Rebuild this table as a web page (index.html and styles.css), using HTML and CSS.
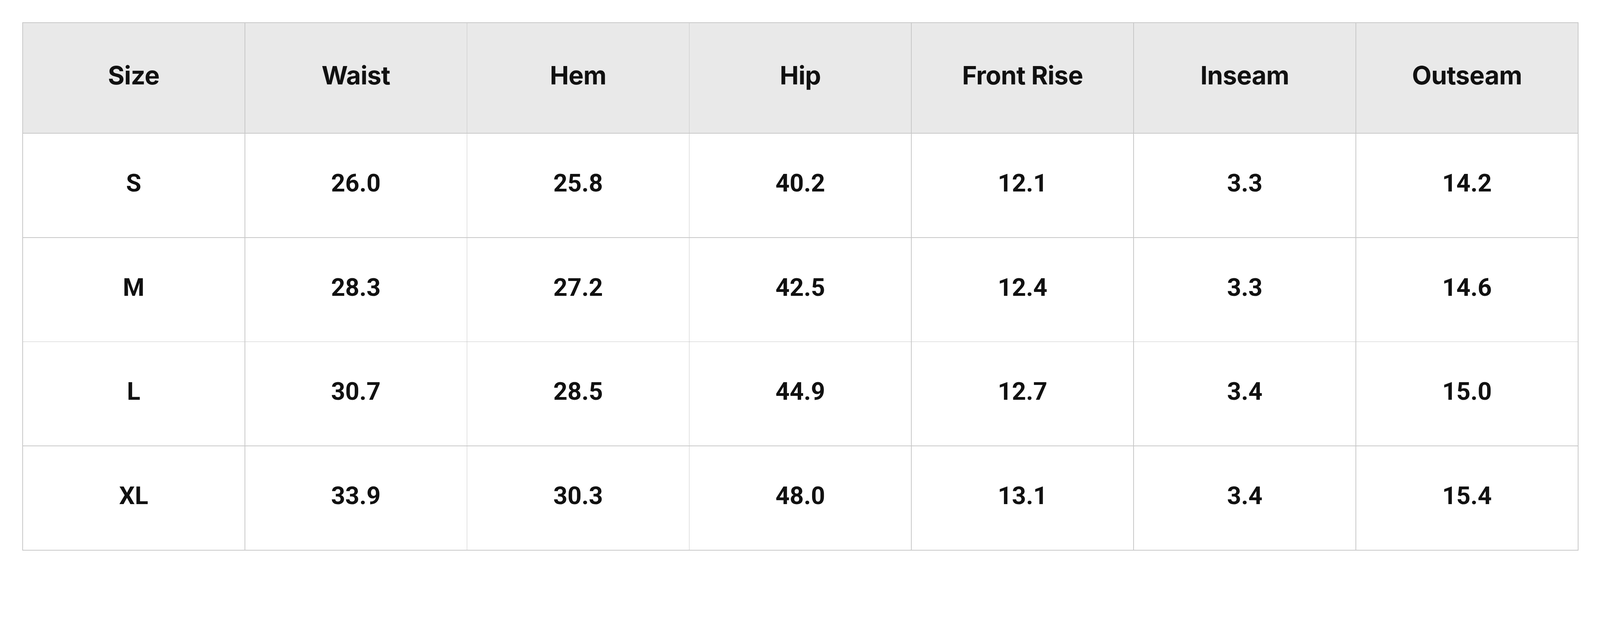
FILE: index.html
```html
<!DOCTYPE html>
<html lang="en">
<head>
<meta charset="utf-8">
<title>Size Chart</title>
<link rel="stylesheet" href="styles.css">
</head>
<body>
<main class="page">
  <div class="size-grid" role="table" aria-label="Size chart">
    <div class="cell head" role="columnheader">Size</div>
    <div class="cell head" role="columnheader">Waist</div>
    <div class="cell head" role="columnheader">Hem</div>
    <div class="cell head" role="columnheader">Hip</div>
    <div class="cell head" role="columnheader">Front Rise</div>
    <div class="cell head" role="columnheader">Inseam</div>
    <div class="cell head" role="columnheader">Outseam</div>

    <div class="cell" role="cell">S</div>
    <div class="cell" role="cell">26.0</div>
    <div class="cell" role="cell">25.8</div>
    <div class="cell" role="cell">40.2</div>
    <div class="cell" role="cell">12.1</div>
    <div class="cell" role="cell">3.3</div>
    <div class="cell" role="cell">14.2</div>

    <div class="cell" role="cell">M</div>
    <div class="cell" role="cell">28.3</div>
    <div class="cell" role="cell">27.2</div>
    <div class="cell" role="cell">42.5</div>
    <div class="cell" role="cell">12.4</div>
    <div class="cell" role="cell">3.3</div>
    <div class="cell" role="cell">14.6</div>

    <div class="cell" role="cell">L</div>
    <div class="cell" role="cell">30.7</div>
    <div class="cell" role="cell">28.5</div>
    <div class="cell" role="cell">44.9</div>
    <div class="cell" role="cell">12.7</div>
    <div class="cell" role="cell">3.4</div>
    <div class="cell" role="cell">15.0</div>

    <div class="cell" role="cell">XL</div>
    <div class="cell" role="cell">33.9</div>
    <div class="cell" role="cell">30.3</div>
    <div class="cell" role="cell">48.0</div>
    <div class="cell" role="cell">13.1</div>
    <div class="cell" role="cell">3.4</div>
    <div class="cell" role="cell">15.4</div>
  </div>
</main>
</body>
</html>
```

FILE: styles.css
```css
:root {
  /* one unit = one pixel of the 4608px-wide design */
  --u: calc(100vw / 4608);
}

html, body {
  margin: 0;
  padding: 0;
  background: #ffffff;
}

.page {
  padding: calc(64 * var(--u)) calc(62 * var(--u)) calc(63 * var(--u)) calc(64 * var(--u));
}

.size-grid {
  display: grid;
  grid-template-columns: repeat(7, calc(638 * var(--u)));
  grid-template-rows: calc(317 * var(--u)) repeat(4, calc(298 * var(--u)));
  gap: calc(2 * var(--u));
  padding: calc(2 * var(--u));
  width: max-content;
  background: #c8c8c8;
  font-weight: 700;
  color: #111111;
}

.cell {
  display: flex;
  align-items: center;
  justify-content: center;
  padding-bottom: calc(13 * var(--u));
  background: #ffffff;
  font-family: "Roboto", "Inter", "Liberation Sans", sans-serif;
  font-size: calc(71 * var(--u));
  line-height: 1.2;
  overflow: hidden;
}

.cell.head {
  background: #e9e9e9;
  font-family: "Inter", "Roboto", "Liberation Sans", sans-serif;
  font-size: calc(73 * var(--u));
  letter-spacing: -0.01em;
  padding-bottom: calc(15 * var(--u));
}
```
